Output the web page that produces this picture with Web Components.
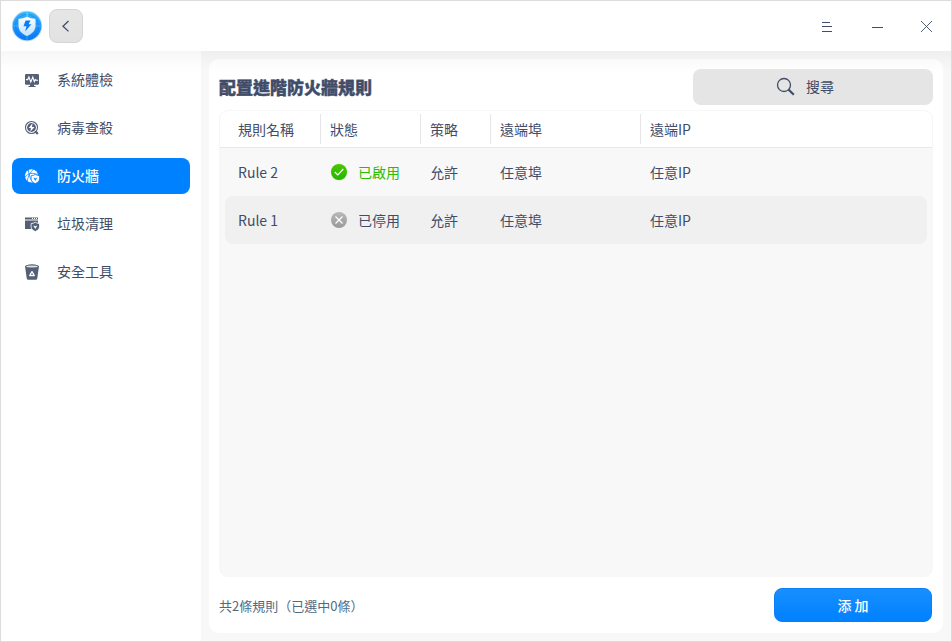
<!DOCTYPE html>
<html lang="zh-Hant">
<head>
<meta charset="utf-8">
<title>防火牆</title>
<style>
html,body{margin:0;height:100%}
body{font:14px/20px "Noto Sans CJK TC",sans-serif;color:#414d68;background:#fff;overflow:hidden}
</style>
</head>
<body>
<app-window></app-window>
<script>
const define=(name,html)=>{
  const t=document.createElement('template');t.innerHTML=html;
  customElements.define(name,class extends HTMLElement{
    constructor(){super();this.attachShadow({mode:'open'}).append(t.content.cloneNode(true));}
  });
};

define('app-logo',`<style>:host{display:block;width:32px;height:32px}svg{display:block}</style>
<svg width="32" height="32" viewBox="0 0 32 32">
<defs><linearGradient id="a" x1="0" y1="0" x2="0" y2="1"><stop stop-color="#35b6ff"/><stop offset="1" stop-color="#0878fa"/></linearGradient>
<linearGradient id="b" x1="0" y1="0" x2="0" y2="1"><stop stop-color="#fff"/><stop offset="1" stop-color="#bfe3ff"/></linearGradient></defs>
<circle cx="16" cy="16" r="15.2" fill="#b9d9f1"/><circle cx="16" cy="16" r="14.3" fill="url(#a)"/>
<circle cx="16" cy="16" r="11.6" fill="none" stroke="#1673e8" stroke-opacity=".55"/>
<path d="M16 2v28M2 16h28" stroke="#55ccff" stroke-opacity=".5"/>
<path d="M16 6.400c2.500 1.600 5.300 2.200 8.500 2.300v6.700c0 5.300-3.400 8.200-8.500 10.600-5.100-2.400-8.500-5.300-8.500-10.600V8.700c3.200-.1 6-.7 8.500-2.300z" fill="url(#b)"/>
<path d="M14.600 10.500h4.900l-1.900 3.700h2.800l-6.300 7.300 1.400-5.300h-3z" fill="#0a7cf5"/><path d="M15 2.300h2.500v4H15z" fill="#39d8ff" opacity=".7"/></svg>`);

define('back-button',`<style>:host{display:flex;box-sizing:border-box;width:34px;height:34px;border:1px solid #d5d5d5;border-radius:8px;background:linear-gradient(#e6e6e6,#e2e2e2);align-items:center;justify-content:center}</style>
<svg width="32" height="32" fill="none" stroke="#414d68" stroke-width="1.300"><path d="M18.500 11L13 16.200l5.500 5.200"/></svg>`);

define('window-controls',`<style>:host{display:flex;height:50px}svg{display:block;width:50px;height:50px;fill:none;stroke:#414d68;shape-rendering:crispEdges}</style>
<svg><path d="M21 21.500h8M21 25.500h10M21 30.500h10"/></svg><svg><path d="M21 26.500h11"/></svg><svg style="shape-rendering:auto"><path d="M20 20l11 11M31 20l-11 11" stroke-width=".9"/></svg>`);

define('title-bar',`<style>:host{display:flex;box-sizing:border-box;height:50px;padding-left:10px;align-items:center;background:#fff}back-button{margin-left:6px}window-controls{margin-left:auto}</style>
<app-logo></app-logo><back-button></back-button><window-controls></window-controls>`);

const icons={
monitor:`<rect x="1" y="2" width="14" height="10.800" rx="1.200" fill="currentColor"/><path d="M6 12h4v2h1.500v1h-7v-1H6z" fill="currentColor"/><path d="M2 7.600h1.700l1.200-2.600 1.900 5L8.800 5l1.500 4.500 1-2 1 .7H14" fill="none" stroke="#fff" stroke-width="1.100"/>`,
scan:`<circle cx="7.500" cy="7.500" r="6" fill="none" stroke="currentColor" stroke-width="1.100"/><circle cx="7.500" cy="7.500" r="4.400" fill="currentColor"/><path d="M8.600 3L4.700 8h2.200l-.6 3.800L10.500 7H8z" fill="#fff"/><path d="M11.300 11.300l2.500 2.800" stroke="currentColor" stroke-width="2.200"/>`,
globe:`<circle cx="7.500" cy="7.800" r="6.600" fill="currentColor"/><path d="M.8 9.500C4 5 8.500 4.500 13.500 6.500M4.500 2C4.500 6 6 10.500 8.500 14M9.500 1.200C6.500 4 4 8 3.300 13" fill="none" stroke="#0081ff" stroke-width=".75"/><path d="M11.300 6.400c1.300.9 2.700 1.200 4.200 1.300v3.100c0 2.300-1.700 3.700-4.200 4.800-2.500-1.100-4.200-2.500-4.200-4.800V7.700c1.500-.1 2.900-.4 4.200-1.300z" fill="currentColor" stroke="#0081ff" stroke-width=".8"/><path d="M9.300 9.500l2 .9 2-.9-2 3.500z" fill="#0081ff"/>`,
clean:`<path d="M1 1.500h13v2H1z M1 4.500h13v3H1z M1 7h7v6H1z" fill="currentColor"/><path d="M8 2.500h1M10 2.500h1M12 2.500h1" stroke="#fff"/><path d="M11.300 6.200c1.300.9 2.500 1.200 4.200 1.300v3.100c0 2.500-1.700 3.900-4.200 5-2.500-1.100-4.200-2.500-4.200-5V7.500c1.700-.1 2.900-.4 4.200-1.300z" fill="currentColor" stroke="#fff" stroke-width=".8"/><path d="M9.300 9.400l2 .9 2-.9-2 3.600z" fill="#fff"/>`,
trash:`<path d="M1 2h14l-1.700 12.200q-.2 1.500-1.700 1.500H4.400q-1.500 0-1.700-1.500z" fill="currentColor"/><ellipse cx="8" cy="2.300" rx="7" ry="2" fill="currentColor"/><ellipse cx="8" cy="2.500" rx="5.700" ry=".9" fill="#dfe2e6"/><path d="M8 7.600l2.300 3.900H5.700z" fill="none" stroke="#fff" stroke-width="1.300" stroke-linejoin="round"/>`};
customElements.define('nav-item',class extends HTMLElement{
  connectedCallback(){this.attachShadow({mode:'open'}).innerHTML=`<style>:host{display:flex;box-sizing:border-box;height:36px;padding-left:12px;gap:17px;align-items:center;border-radius:8px}:host([active]){background:#0081ff;color:#fff;font-weight:500}svg{width:16px;height:16px;color:#536076}:host([active]) svg{color:#fff}span{padding-bottom:2px}</style>
<svg viewBox="0 0 16 16">${icons[this.getAttribute('icon')]}</svg><span><slot></slot></span>`;}
});

define('side-nav',`<style>:host{display:flex;box-sizing:border-box;width:200px;padding:11px;flex-direction:column;gap:12px;background:linear-gradient(#f7f7f7,#fff 20px)}</style>
<nav-item icon="monitor">系統體檢</nav-item><nav-item icon="scan">病毒查殺</nav-item><nav-item icon="globe" active>防火牆</nav-item><nav-item icon="clean">垃圾清理</nav-item><nav-item icon="trash">安全工具</nav-item>`);

define('search-box',`<style>:host{display:flex;box-sizing:border-box;width:240px;height:36px;padding-right:16px;border-radius:8px;background:#e5e5e5;align-items:center;justify-content:center;gap:10px}span{padding-bottom:2px}</style>
<svg width="20" height="20" fill="none" stroke="#414d68"><circle cx="8" cy="8" r="6.500" stroke-width="1.300"/><path d="M12.500 12.500l5.300 5.200" stroke-width="2.300"/></svg><span>搜尋</span>`);

customElements.define('rule-status',class extends HTMLElement{
  connectedCallback(){const on=this.hasAttribute('on');
    this.attachShadow({mode:'open'}).innerHTML=`<style>:host{display:flex;align-items:center;gap:10px;color:${on?'#2dbd00':'inherit'}}</style>
<svg width="18" height="18"><defs><linearGradient id="g" x1="0" y1="0" x2="0" y2="1"><stop stop-color="${on?'#4bc800':'#b8b8b8'}"/><stop offset="1" stop-color="${on?'#24b500':'#999'}"/></linearGradient></defs>${on?'<circle cx="9" cy="9.500" r="8.300" fill="#24b500" opacity=".18"/>':''}<circle cx="9" cy="9" r="8" fill="url(#g)"/><path d="${on?'M4.800 9l3 3 5.500-6':'M5.500 5.500l7 7M12.500 5.500l-7 7'}" fill="none" stroke="#fff" stroke-width="1.200"/></svg><span><slot></slot></span>`;}
});

define('table-header',`<style>:host{display:grid;grid-template-columns:101px 100px 70px 150px 1fr;height:36px;align-items:center;background:#fff;border-bottom:1px solid #e8e8e8;border-radius:8px 8px 0 0}
span{box-sizing:border-box;height:30px;line-height:30px;padding-left:9px;border-right:1px solid #e6e6e6}span:first-of-type{padding-left:18px;}span:last-child{border:0}</style>
<span>規則名稱</span><span>狀態</span><span>策略</span><span>遠端埠</span><span>遠端IP</span>`);

define('rule-row',`<style>:host{display:grid;grid-template-columns:92px 100px 70px 150px 1fr;height:48px;margin:0 5px;padding-left:13px;align-items:center;border-radius:8px}:host([alt]){background:#f0f0f0}</style>
<slot name="name"></slot><slot name="status"></slot><span>允許</span><span>任意埠</span><span>任意IP</span>`);

define('rules-table',`<style>:host{display:block;box-sizing:border-box;height:467px;border:1px solid #f7f7f7;border-radius:9px;background:#f8f8f8;overflow:hidden}</style>
<table-header></table-header>
<rule-row><span slot="name">Rule 2</span><rule-status slot="status" on>已啟用</rule-status></rule-row>
<rule-row alt><span slot="name">Rule 1</span><rule-status slot="status">已停用</rule-status></rule-row>`);

define('add-button',`<style>:host{display:flex;box-sizing:border-box;width:158px;height:34px;border:1px solid #0b80f5;border-radius:8px;background:linear-gradient(#188fff,#0081ff);color:#fff;align-items:center;justify-content:center;font-weight:500;white-space:pre}</style><span>添 加</span>`);

define('rules-panel',`<style>:host{display:flex;box-sizing:border-box;flex-direction:column;width:734px;height:574px;padding:10px 10px 11px;border-radius:10px;background:linear-gradient(#fafafa,#fff 14px)}
header{display:flex;justify-content:space-between;align-items:center;height:36px;margin-bottom:5px}h1{margin:0;font-size:17px;line-height:24px;font-weight:900;-webkit-text-stroke:.4px #414d68}
footer{display:flex;justify-content:space-between;align-items:center;padding:11px 1px 0 0;font-size:13px;color:#526a7f}footer>span{padding-top:1px}add-button{font-size:14px}</style>
<header><h1>配置進階防火牆規則</h1><search-box></search-box></header><rules-table></rules-table>
<footer><span>共2條規則（已選中0條）</span><add-button></add-button></footer>`);

define('app-window',`<style>:host{display:flex;box-sizing:border-box;width:952px;height:642px;flex-direction:column;border:1px solid #dcdcdc;background:#fff}
main{display:flex;flex:1;background:linear-gradient(#efefef,#f8f8f8 20px)}rules-panel{margin:8px}</style>
<title-bar></title-bar><main><side-nav></side-nav><rules-panel></rules-panel></main>`);
</script>
</body>
</html>
